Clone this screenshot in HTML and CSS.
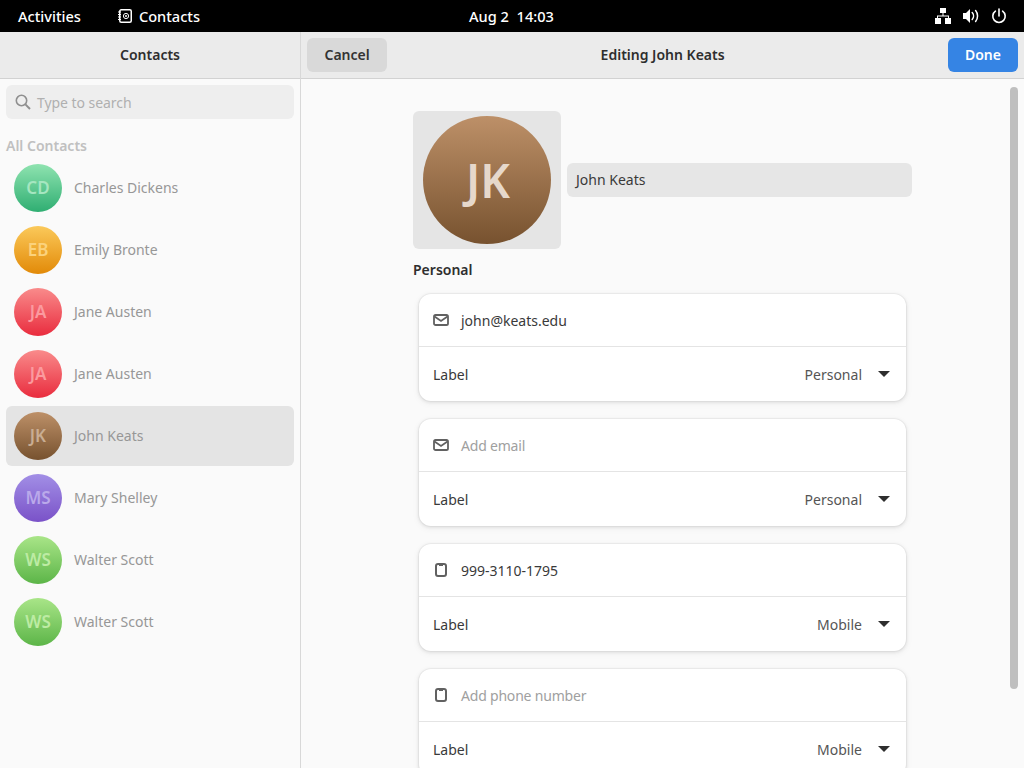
FILE: index.html
```html
<!DOCTYPE html>
<html lang="en">

<head>
    <meta charset="UTF-8">
    <title>Contacts</title>
    <link rel="stylesheet" href="styles.css">
</head>

<body>

    <div class="topbar">
        <div class="topbar-left">
            <span class="activities">Activities</span>
            <span class="app-menu">
                <svg class="app-icon" width="16" height="16" viewBox="0 0 16 16">
                    <rect x="2.75" y="1.75" width="11.5" height="12.5" rx="1.5" fill="none" stroke="#fff" stroke-width="1.5"/>
                    <path d="M1 4h3M1 6.5h3M1 9h3M1 11.5h3" stroke="#fff" stroke-width="1"/>
                    <circle cx="9" cy="8" r="2.6" fill="none" stroke="#fff" stroke-width="1"/>
                    <circle cx="9" cy="8" r="1" fill="#fff"/>
                </svg>
                Contacts
            </span>
        </div>
        <div class="clock">Aug 2&nbsp; 14:03</div>
        <div class="tray">
            <svg width="16" height="16" viewBox="0 0 16 16" fill="#fff">
                <path d="M5 0h6v5H5zM0 10h6v6H0zM10 10h6v6h-6z"/>
                <path d="M7.5 5h1v2.5H14V10h-1V8.5H3V10H2V7.5h5.5z"/>
            </svg>
            <svg width="16" height="16" viewBox="0 0 16 16" fill="#fff">
                <path d="M0 5h3l4-4v14l-4-4H0z"/>
                <path d="M9.2 4.6a5 5 0 0 1 0 6.8" fill="none" stroke="#fff" stroke-width="1.5" stroke-linecap="round"/>
                <path d="M12.6 2.6a8.4 8.4 0 0 1 0 10.8" fill="none" stroke="#fff" stroke-width="1.5" stroke-linecap="round"/>
            </svg>
            <svg width="16" height="16" viewBox="0 0 16 16" fill="none" stroke="#fff" stroke-width="1.6">
                <path d="M8 1v7" stroke-linecap="round"/>
                <path d="M4.4 3.2a6.2 6.2 0 1 0 7.2 0" stroke-linecap="round"/>
            </svg>
        </div>
    </div>

    <div class="window">
        <div class="sidebar">
            <div class="header sidebar-header">Contacts</div>
            <div class="search">
                <svg width="16" height="16" viewBox="0 0 16 16" fill="none" stroke="#8f8f8f" stroke-width="1.6">
                    <circle cx="6.5" cy="6.5" r="5.2"/>
                    <path d="M10.4 10.4l4.6 4.6" stroke-width="2"/>
                </svg>
                <span>Type to search</span>
            </div>
            <div class="group-title">All Contacts</div>
            <div class="contact-list">
                <div class="contact">
                    <div class="avatar green">CD</div>
                    <span>Charles Dickens</span>
                </div>
                <div class="contact">
                    <div class="avatar orange">EB</div>
                    <span>Emily Bronte</span>
                </div>
                <div class="contact">
                    <div class="avatar red">JA</div>
                    <span>Jane Austen</span>
                </div>
                <div class="contact">
                    <div class="avatar red">JA</div>
                    <span>Jane Austen</span>
                </div>
                <div class="contact selected">
                    <div class="avatar brown">JK</div>
                    <span>John Keats</span>
                </div>
                <div class="contact">
                    <div class="avatar purple">MS</div>
                    <span>Mary Shelley</span>
                </div>
                <div class="contact">
                    <div class="avatar lime">WS</div>
                    <span>Walter Scott</span>
                </div>
                <div class="contact">
                    <div class="avatar lime">WS</div>
                    <span>Walter Scott</span>
                </div>
            </div>
        </div>

        <div class="main">
            <div class="header main-header">
                <button class="btn">Cancel</button>
                <div class="main-title">Editing John Keats</div>
                <button class="btn btn-done">Done</button>
            </div>
            <div class="editor">
                <div class="scrollbar"></div>
                <div class="form">
                    <div class="name-row">
                        <div class="photo">
                            <div class="avatar-big brown">JK</div>
                        </div>
                        <div class="name-entry">John Keats</div>
                    </div>
                    <div class="section-title">Personal</div>

                    <div class="card">
                        <div class="card-row">
                            <svg class="row-icon" width="16" height="16" viewBox="0 0 16 16" fill="none" stroke="#616161" stroke-width="1.8">
                                <rect x="1" y="3" width="14" height="10" rx="1.6"/>
                                <path d="M1.5 4.5L8 9l6.5-4.5"/>
                            </svg>
                            <span>john@keats.edu</span>
                        </div>
                        <div class="card-row label-row">
                            <span>Label</span>
                            <div class="picker"><span class="picker-value">Personal</span><i class="arrow"></i></div>
                        </div>
                    </div>

                    <div class="card">
                        <div class="card-row">
                            <svg class="row-icon" width="16" height="16" viewBox="0 0 16 16" fill="none" stroke="#616161" stroke-width="1.8">
                                <rect x="1" y="3" width="14" height="10" rx="1.6"/>
                                <path d="M1.5 4.5L8 9l6.5-4.5"/>
                            </svg>
                            <span class="placeholder">Add email</span>
                        </div>
                        <div class="card-row label-row">
                            <span>Label</span>
                            <div class="picker"><span class="picker-value">Personal</span><i class="arrow"></i></div>
                        </div>
                    </div>

                    <div class="card">
                        <div class="card-row">
                            <svg class="row-icon" width="16" height="16" viewBox="0 0 16 16" fill="none" stroke="#616161" stroke-width="2">
                                <rect x="3" y="2" width="10" height="12" rx="2"/>
                                <path d="M6 3h4"/>
                            </svg>
                            <span>999-3110-1795</span>
                        </div>
                        <div class="card-row label-row">
                            <span>Label</span>
                            <div class="picker"><span class="picker-value">Mobile</span><i class="arrow"></i></div>
                        </div>
                    </div>

                    <div class="card">
                        <div class="card-row">
                            <svg class="row-icon" width="16" height="16" viewBox="0 0 16 16" fill="none" stroke="#616161" stroke-width="2">
                                <rect x="3" y="2" width="10" height="12" rx="2"/>
                                <path d="M6 3h4"/>
                            </svg>
                            <span class="placeholder">Add phone number</span>
                        </div>
                        <div class="card-row label-row">
                            <span>Label</span>
                            <div class="picker"><span class="picker-value">Mobile</span><i class="arrow"></i></div>
                        </div>
                    </div>
                </div>
            </div>
        </div>
    </div>

</body>

</html>
```

FILE: styles.css
```css
* {
    box-sizing: border-box;
}

html,
body {
    height: 100%;
}

body {
    margin: 0;
    overflow: hidden;
    display: flex;
    flex-direction: column;
    font-family: "Noto Sans", "Open Sans", sans-serif;
    font-size: 14px;
    color: #3a3a3a;
    background: #fafafa;
}

/* gnome shell bar */
.topbar {
    height: 32px;
    flex: none;
    background: #000;
    color: #fff;
    display: grid;
    grid-template-columns: 1fr auto 1fr;
    align-items: center;
    font-size: 14.6px;
    font-weight: 500;
}

.topbar-left {
    display: flex;
    align-items: center;
    padding-left: 18px;
    gap: 36px;
}

.app-menu {
    display: flex;
    align-items: center;
    gap: 6px;
}

.clock {
    margin-left: -1px;
}

.tray {
    display: flex;
    justify-content: flex-end;
    align-items: center;
    gap: 12px;
    padding-right: 17px;
}

.window {
    flex: 1;
    display: flex;
    min-height: 0;
}

.header {
    height: 47px;
    flex: none;
    background: #ebebeb;
    border-bottom: 1px solid #d2d2d2;
    display: flex;
    align-items: center;
    font-weight: 600;
    color: #2e2e2e;
}

/* left column */
.sidebar {
    width: 301px;
    flex: none;
    border-right: 1px solid #d8d8d8;
    display: flex;
    flex-direction: column;
}

.sidebar-header {
    justify-content: center;
    padding-bottom: 2px;
}

.search {
    margin: 6px 6px 0;
    height: 34px;
    background: #eeeeee;
    border-radius: 6px;
    padding-left: 9px;
    display: flex;
    align-items: center;
    gap: 6px;
    color: #b0b0b0;
    letter-spacing: -0.05px;
}

.group-title {
    margin: 17px 0 0 6px;
    height: 20px;
    line-height: 19px;
    font-weight: 600;
    color: #c0c0c0;
}

.contact-list {
    margin: 2px 6px 0;
    display: flex;
    flex-direction: column;
    gap: 2px;
}

.contact {
    height: 60px;
    display: flex;
    align-items: center;
    gap: 12px;
    padding-left: 8px;
    border-radius: 6px;
    color: #979797;
}

.contact span {
    padding-bottom: 2px;
}

.contact.selected {
    background: #e4e4e4;
}

.avatar {
    width: 48px;
    height: 48px;
    border-radius: 50%;
    display: flex;
    align-items: center;
    justify-content: center;
    font-size: 17px;
    font-weight: 600;
    padding-bottom: 1px;
}

.green {
    background: linear-gradient(#8fe3b0, #2fae72);
    color: #a5e6c0;
}

.orange {
    background: linear-gradient(#fbc95a, #e28a08);
    color: #fbd27c;
}

.red {
    background: linear-gradient(#f98b8b, #e92c3e);
    color: #fb9a9f;
}

.brown {
    background: linear-gradient(#bd9068, #77522f);
    color: #c9ad93;
}

.purple {
    background: linear-gradient(#a28fe6, #7a52c8);
    color: #baa9ea;
}

.lime {
    background: linear-gradient(#a9e588, #5cb548);
    color: #bdeba4;
}

/* right column */
.main {
    flex: 1;
    min-width: 0;
    display: flex;
    flex-direction: column;
}

.main-header {
    justify-content: space-between;
    padding: 0 6px;
}

.main-title {
    margin-right: 10px;
    padding-bottom: 2px;
}

.btn {
    height: 34px;
    padding: 0 17.5px 2px;
    border: none;
    border-radius: 6px;
    background: #d9d9d9;
    color: #333;
    font: inherit;
}

.btn-done {
    padding: 0 17px 2px;
    background: #3584e4;
    color: #fff;
}

.editor {
    flex: 1;
    min-height: 0;
    overflow: hidden;
    position: relative;
}

.scrollbar {
    position: absolute;
    top: 8px;
    right: 6px;
    width: 8px;
    height: 602px;
    background: #bfbfbf;
    border-radius: 4px;
}

.form {
    width: 499px;
    margin: 32px 0 0 112px;
}

.name-row {
    display: flex;
    align-items: center;
    gap: 6px;
}

.photo {
    width: 148px;
    height: 138px;
    background: #e5e5e5;
    border-radius: 6px;
    display: flex;
    justify-content: center;
    align-items: center;
}

.avatar-big {
    width: 128px;
    height: 128px;
    border-radius: 50%;
    display: flex;
    align-items: center;
    justify-content: center;
    font-size: 46px;
    font-weight: 600;
    color: #e6d8cb;
    padding-left: 2px;
}

.name-entry {
    width: 345px;
    height: 34px;
    background: #e6e6e6;
    border-radius: 6px;
    padding-left: 9px;
    line-height: 34px;
}

.section-title {
    margin-top: 11px;
    height: 20px;
    line-height: 20px;
    font-weight: 600;
    color: #2e2e2e;
}

.card {
    width: 487px;
    margin: 14px 0 0 6px;
    background: #fff;
    border-radius: 12px;
    box-shadow: 0 0 0 1px rgba(0, 0, 0, 0.03), 0 1px 3px 1px rgba(0, 0, 0, 0.07), 0 2px 6px 2px rgba(0, 0, 0, 0.03);
}

.card + .card {
    margin-top: 18px;
}

.card-row {
    height: 52px;
    display: flex;
    align-items: center;
    padding: 0 16px 0 14px;
}

.row-icon {
    margin-right: 12px;
    flex: none;
}

.label-row {
    height: 55px;
    border-top: 1px solid #e4e4e4;
    justify-content: space-between;
}

.picker {
    display: flex;
    align-items: center;
    gap: 16px;
}

.picker-value {
    color: #555;
}

.arrow {
    width: 0;
    height: 0;
    border-left: 6px solid transparent;
    border-right: 6px solid transparent;
    border-top: 6px solid #2e2e2e;
}

.placeholder {
    color: #a0a0a0;
    letter-spacing: -0.2px;
}
```
